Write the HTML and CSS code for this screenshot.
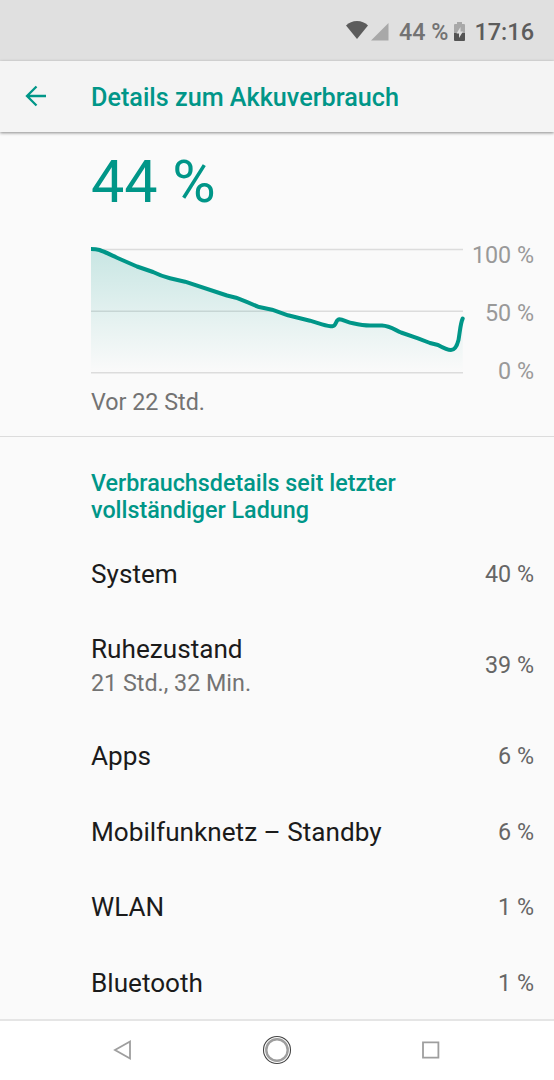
FILE: index.html
```html
<!doctype html>
<html lang="de">
  <head>
    <meta charset="utf-8">
    <meta name="viewport" content="width=device-width, initial-scale=1">
    <title>Details zum Akkuverbrauch</title>
    <link rel="stylesheet" href="styles.css">
  </head>
  <body>
    <div class="statusbar">
      <svg class="wifi" width="22" height="18" viewBox="0 0 22 18"><path d="M0 4.5Q4.5 0 11 0t11 4.5L11 18z" fill="#5c5c5c"/></svg>
      <svg class="signal" width="18" height="18" viewBox="0 0 18 18"><path d="M17.5 0v17.5H0z" fill="#a8a8a8"/></svg>
      <span class="level">44 %</span>
      <svg class="battery" width="11" height="19" viewBox="0 0 11 19">
        <path d="M3 0h5v2h2q1 0 1 1v8H0V3q0-1 1-1h2z" fill="#a8a8a8"/>
        <path d="M0 11h11v7q0 1-1 1H1q-1 0-1-1z" fill="#545454"/>
        <path d="M6.5 5L2.5 11.500H5V16l4-6.500H6.500z" fill="#e0e0e0"/>
      </svg>
      <span class="clock">17:16</span>
    </div>

    <div class="toolbar">
      <svg class="back" width="22" height="22" viewBox="0 0 22 22"><path d="M21 11H2M11.500 1.500L2 11l9.500 9.500" fill="none" stroke="#009688" stroke-width="2.300"/></svg>
      <h1>Details zum Akkuverbrauch</h1>
    </div>

    <div class="usage">
      <div class="percent">44 %</div>
      <div class="graph">
        <svg width="374" height="136" viewBox="0 0 374 136">
          <defs>
            <linearGradient id="fade" x1="0" y1="8" x2="0" y2="131" gradientUnits="userSpaceOnUse">
              <stop offset="0" stop-color="#009688" stop-opacity="0.2"/>
              <stop offset="1" stop-color="#009688" stop-opacity="0"/>
            </linearGradient>
            <clipPath id="plot"><path d="M0 0h374v136H0z"/></clipPath>
          </defs>
          <path d="M0 8.500H372M0 70.200H372M0 131.700H372" stroke="#dcdcdc" stroke-width="1.400"/>
          <path fill="url(#fade)" d="M0 8C3 8 6 8.300 8.500 9C14 11 20 14 26 16.700L46 25.500L62 31Q70 35 79 37.200L94 40.700L136 54.500L145 56.700Q156 61 167 65.700L181 68.700L197 74.300L219 79.700L231 83.300Q238 85.300 241.500 85.300C245.500 85 244.500 78.300 248.500 78.300C252 78.500 257 81.500 262 82.300Q272 84.500 279 84.600H291C299 85 304 89 310 91.500L327 97.300L339 102L347 104Q356 109 360 109C364 109 366.500 103 367.500 99C369 90 369.500 82 371.700 77.500V131.500H0z"/>
          <path class="curve" clip-path="url(#plot)" d="M0 8C3 8 6 8.300 8.500 9C14 11 20 14 26 16.700L46 25.500L62 31Q70 35 79 37.200L94 40.700L136 54.500L145 56.700Q156 61 167 65.700L181 68.700L197 74.300L219 79.700L231 83.300Q238 85.300 241.500 85.300C245.500 85 244.500 78.300 248.500 78.300C252 78.500 257 81.500 262 82.300Q272 84.500 279 84.600H291C299 85 304 89 310 91.500L327 97.300L339 102L347 104Q356 109 360 109C364 109 366.500 103 367.500 99C369 90 369.500 82 371.700 77.500"/>
        </svg>
        <div class="scale">
          <span>100 %</span>
          <span>50 %</span>
          <span>0 %</span>
        </div>
      </div>
      <div class="since">Vor 22 Std.</div>
    </div>

    <div class="details">
      <h2>Verbrauchsdetails seit letzter vollständiger Ladung</h2>
      <div class="row"><span class="name">System</span><span class="value">40 %</span></div>
      <div class="row tall">
        <div>
          <div class="name">Ruhezustand</div>
          <div class="sub">21 Std., 32 Min.</div>
        </div>
        <span class="value">39 %</span>
      </div>
      <div class="row"><span class="name">Apps</span><span class="value">6 %</span></div>
      <div class="row"><span class="name">Mobilfunknetz – Standby</span><span class="value">6 %</span></div>
      <div class="row"><span class="name">WLAN</span><span class="value">1 %</span></div>
      <div class="row"><span class="name">Bluetooth</span><span class="value">1 %</span></div>
    </div>

    <div class="navbar">
      <svg width="20" height="22" viewBox="0 0 20 22"><path d="M17 2.500v17L2 11z"/></svg>
      <svg width="30" height="30" viewBox="0 0 30 30"><circle cx="15" cy="15" r="13.500" class="ring"/><circle cx="15" cy="15" r="10.700" class="home"/></svg>
      <svg width="20" height="20" viewBox="0 0 20 20"><path d="M2 2.300h15.400v15.400H2z"/></svg>
    </div>
  </body>
</html>
```
FILE: styles.css
```css
* {
  box-sizing: border-box;
}

body {
  margin: 0;
  height: 1080px;
  display: flex;
  flex-direction: column;
  overflow: hidden;
  background: #fafafa;
  color: #1b1b1b;
  font-family: Roboto, sans-serif;
}

h1, h2 {
  margin: 0;
  color: #009688;
  font-weight: 500;
}

.statusbar {
  height: 61px;
  padding: 2px 20px 0 0;
  display: flex;
  align-items: center;
  justify-content: flex-end;
  background: #e0e0e0;
  color: #5c5c5c;
  white-space: nowrap;
}

.wifi {
  margin-right: 3px;
  margin-bottom: 3px;
}

.signal {
  margin-right: 10px;
}

.level {
  font-size: 23.3px;
  color: #737373;
  font-weight: 500;
}

.battery {
  margin-left: 6px;
  margin-right: 9px;
}

.clock {
  font-size: 23.5px;
  font-weight: 500;
}

.toolbar {
  height: 71px;
  flex-shrink: 0;
  padding-left: 25px;
  display: flex;
  align-items: center;
  background: #f4f4f4;
  box-shadow: 0 1px 3px rgba(0, 0, 0, 0.45);
}

.back {
  margin-bottom: 1px;
}

.toolbar h1 {
  margin-left: 44px;
  padding-top: 2px;
  font-size: 25.2px;
}

.usage {
  height: 305px;
  flex-shrink: 0;
  padding: 14px 20px 0 91px;
  border-bottom: 1px solid #dcdcdc;
}

.percent {
  height: 95px;
  line-height: 71px;
  font-size: 59.300px;
  color: #009688;
}

.graph {
  height: 146px;
  display: flex;
  justify-content: space-between;
}

.graph svg {
  flex-shrink: 0;
  overflow: visible;
}

.curve {
  fill: none;
  stroke: #009688;
  stroke-width: 4;
  stroke-linecap: round;
  stroke-linejoin: round;
}

.scale {
  display: flex;
  flex-direction: column;
  align-items: flex-end;
  font-size: 23.3px;
  line-height: 58px;
  margin-top: -15px;
  color: #999;
  white-space: nowrap;
}

.since {
  font-size: 23.3px;
  line-height: 31px;
  color: #737373;
}

.details {
  flex: 1;
  min-height: 0;
  padding: 33px 20px 0 91px;
}

.details h2 {
  width: 340px;
  margin-bottom: 12px;
  font-size: 23.3px;
  line-height: 27px;
}

.row {
  height: 75.5px;
  display: flex;
  align-items: center;
  justify-content: space-between;
}

.row.tall {
  height: 107px;
}

.name {
  font-size: 26.15px;
  line-height: 32px;
}

.sub {
  font-size: 23.3px;
  line-height: 32px;
  padding-top: 2px;
  margin-bottom: -2px;
  color: #737373;
}

.value {
  font-size: 23.3px;
  color: #666;
}

.navbar {
  height: 61px;
  flex-shrink: 0;
  padding: 0 113px 2px;
  display: flex;
  align-items: center;
  justify-content: space-between;
  background: #fff;
  border-top: 2px solid #e5e5e5;
}

.navbar svg {
  fill: none;
  stroke: #9e9e9e;
  stroke-width: 1.8;
}

.navbar .ring {
  stroke: #444;
  stroke-width: 1.1;
}

.navbar .home {
  stroke-width: 2.4;
}
```
